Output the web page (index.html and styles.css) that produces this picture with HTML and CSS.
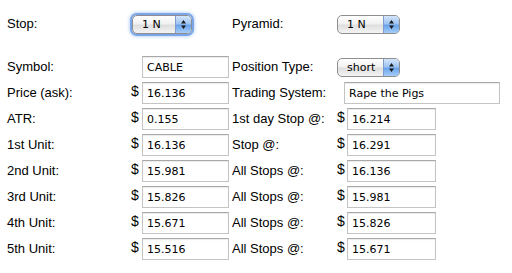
FILE: index.html
```html
<!DOCTYPE html>
<html lang="en">
<head>
    <meta charset="UTF-8">
    <title>Turtle Position Calculator</title>
    <link rel="stylesheet" href="styles.css">
</head>
<body>

<div class="calc">
    <!-- ligne du haut -->
    <div class="label top">Stop:</div>
    <div class="popup focused top span-l">
        <span class="val">1 N</span>
        <span class="arrows"><svg width="7" height="11" viewBox="0 0 7 11"><path d="M3.5 1 L6 4.5 L1 4.5 Z M3.5 10 L6 6.5 L1 6.5 Z" fill="#1a1a1a"/></svg></span>
    </div>
    <div class="label top right-label">Pyramid:</div>
    <div class="popup top span-r wide">
        <span class="val">1 N</span>
        <span class="arrows"><svg width="7" height="11" viewBox="0 0 7 11"><path d="M3.5 1 L6 4.5 L1 4.5 Z M3.5 10 L6 6.5 L1 6.5 Z" fill="#1a1a1a"/></svg></span>
    </div>

    <div class="label">Symbol:</div>
    <div></div>
    <input class="field" type="text" value="CABLE">
    <div class="label">Position Type:</div>
    <div class="popup span-r wide">
        <span class="val">short</span>
        <span class="arrows"><svg width="7" height="11" viewBox="0 0 7 11"><path d="M3.5 1 L6 4.5 L1 4.5 Z M3.5 10 L6 6.5 L1 6.5 Z" fill="#1a1a1a"/></svg></span>
    </div>

    <div class="label">Price (ask):</div>
    <div class="dollar">$</div>
    <input class="field" type="text" value="16.136">
    <div class="label">Trading System:</div>
    <input class="field system" type="text" value="Rape the Pigs">

    <div class="label">ATR:</div>
    <div class="dollar">$</div>
    <input class="field" type="text" value="0.155">
    <div class="label">1st day Stop @:</div>
    <div class="dollar">$</div>
    <input class="field r" type="text" value="16.214">

    <div class="label">1st Unit:</div>
    <div class="dollar">$</div>
    <input class="field" type="text" value="16.136">
    <div class="label">Stop @:</div>
    <div class="dollar">$</div>
    <input class="field r" type="text" value="16.291">

    <div class="label">2nd Unit:</div>
    <div class="dollar">$</div>
    <input class="field" type="text" value="15.981">
    <div class="label">All Stops @:</div>
    <div class="dollar">$</div>
    <input class="field r" type="text" value="16.136">

    <div class="label">3rd Unit:</div>
    <div class="dollar">$</div>
    <input class="field" type="text" value="15.826">
    <div class="label">All Stops @:</div>
    <div class="dollar">$</div>
    <input class="field r" type="text" value="15.981">

    <div class="label">4th Unit:</div>
    <div class="dollar">$</div>
    <input class="field" type="text" value="15.671">
    <div class="label">All Stops @:</div>
    <div class="dollar">$</div>
    <input class="field r" type="text" value="15.826">

    <div class="label">5th Unit:</div>
    <div class="dollar">$</div>
    <input class="field" type="text" value="15.516">
    <div class="label">All Stops @:</div>
    <div class="dollar">$</div>
    <input class="field r" type="text" value="15.671">
</div>

</body>
</html>
```

FILE: styles.css
```css
body {
    margin: 0;
    padding: 13px 0 0 7px;
    background: #ffffff;
    color: #000000;
    font-family: 'Liberation Sans', Arial, sans-serif;
    font-size: 13px;
}

.calc {
    display: grid;
    grid-template-columns: 124px 11px 90px 105px 10px 1fr;
    grid-template-rows: 39px repeat(8, 22px);
    row-gap: 4px;
}

.label {
    line-height: 22px;
    white-space: nowrap;
}
.top {
    align-self: start;
}

.dollar {
    line-height: 18px;
    font-size: 14px;
}

/* champs texte */
.field {
    box-sizing: border-box;
    width: 87px;
    height: 22px;
    margin: 0;
    padding: 1px 4px 0;
    border: 1px solid #c4c4c4;
    border-top-color: #a8a8a8;
    box-shadow: inset 0 1px 1px rgba(0, 0, 0, 0.08);
    font-family: 'DejaVu Sans', 'Lucida Grande', sans-serif;
    font-size: 11px;
    color: #000000;
    background: #ffffff;
    outline: none;
}
.field.r {
    width: 89px;
}
.field.system {
    grid-column: 5 / 7;
    margin-left: 7px;
    width: 156px;
}

/* menus déroulants façon aqua */
.popup {
    box-sizing: border-box;
    display: flex;
    height: 19px;
    margin-top: 2px;
    border: 1px solid #8e8e8e;
    border-radius: 5px;
    overflow: hidden;
    background: linear-gradient(#ffffff, #f1f1f1 45%, #dedede 55%, #f4f4f4);
    font-family: 'DejaVu Sans', 'Lucida Grande', sans-serif;
    font-size: 11px;
    justify-self: start;
}
.popup .val {
    flex: 1;
    padding-left: 9px;
    line-height: 17px;
}
.popup .arrows {
    width: 15px;
    display: flex;
    align-items: center;
    justify-content: center;
    border-left: 1px solid #7f9ccc;
    background: linear-gradient(#d4e5fa, #9fc4f2 45%, #6aa4ec 55%, #a7cdf7);
}
.span-l {
    grid-column: 2 / 4;
    margin-left: 1px;
    width: 60px;
}
.span-r {
    grid-column: 5 / 7;
}
.wide {
    width: 63px;
}
.focused {
    box-shadow: 0 0 0 2px rgba(96, 148, 226, 0.75), 0 0 3px 3px rgba(120, 170, 240, 0.45);
}
```
